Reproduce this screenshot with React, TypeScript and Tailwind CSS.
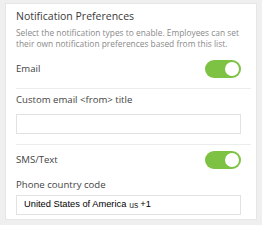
import React from "react";

function Toggle() {
  return (
    <div className="w-[36px] h-[18px] rounded-full bg-[#7dc242] flex items-center justify-end pr-[2px]">
      <div className="w-[14px] h-[14px] rounded-full bg-white" />
    </div>
  );
}

export default function App() {
  return (
    <div className="w-[262px] h-[225px] bg-[#efefef] pt-[3px] pl-[5px] pr-[5px] pb-[5px] font-['Open_Sans',sans-serif]">
      <div className="w-[252px] h-[217px] bg-white border border-[#e6e6e6] pl-[10px] pr-[15px] pt-[5px]">
        <div className="text-[10.5px] leading-[14px] text-[#3a3a3a]">Notification Preferences</div>
        <div className="mt-[5px] text-[8.4px] leading-[10.5px] text-[#8a8a8a]">
          Select the notification types to enable. Employees can set their own notification preferences based from this list.
        </div>
        <div className="mt-[11px] flex items-center justify-between h-[18px]">
          <span className="text-[9.6px] text-[#444]">Email</span>
          <Toggle />
        </div>
        <div className="mt-[10px] h-px bg-[#ececec] mr-[-10px]" />
        <div className="mt-[5px] text-[9.6px] leading-[12px] text-[#444]">Custom email &lt;from&gt; title</div>
        <div className="mt-[8px] h-[20px] border border-[#e2e2e2]" />
        <div className="mt-[10px] h-px bg-[#ececec] mr-[-10px]" />
        <div className="mt-[6px] flex items-center justify-between h-[18px]">
          <span className="text-[9.6px] text-[#444]">SMS/Text</span>
          <Toggle />
        </div>
        <div className="mt-[10px] text-[9.6px] leading-[12px] text-[#444]">Phone country code</div>
        <div className="mt-[4px] h-[20px] border border-[#e2e2e2] flex items-center pl-[7px] font-['Liberation_Sans',Arial,sans-serif] text-[9.3px] text-black">
          United States of America <span className="text-[8.5px] ml-[3px] text-[#333]">us</span>
          <span className="ml-[2px]">+1</span>
        </div>
      </div>
    </div>
  );
}
